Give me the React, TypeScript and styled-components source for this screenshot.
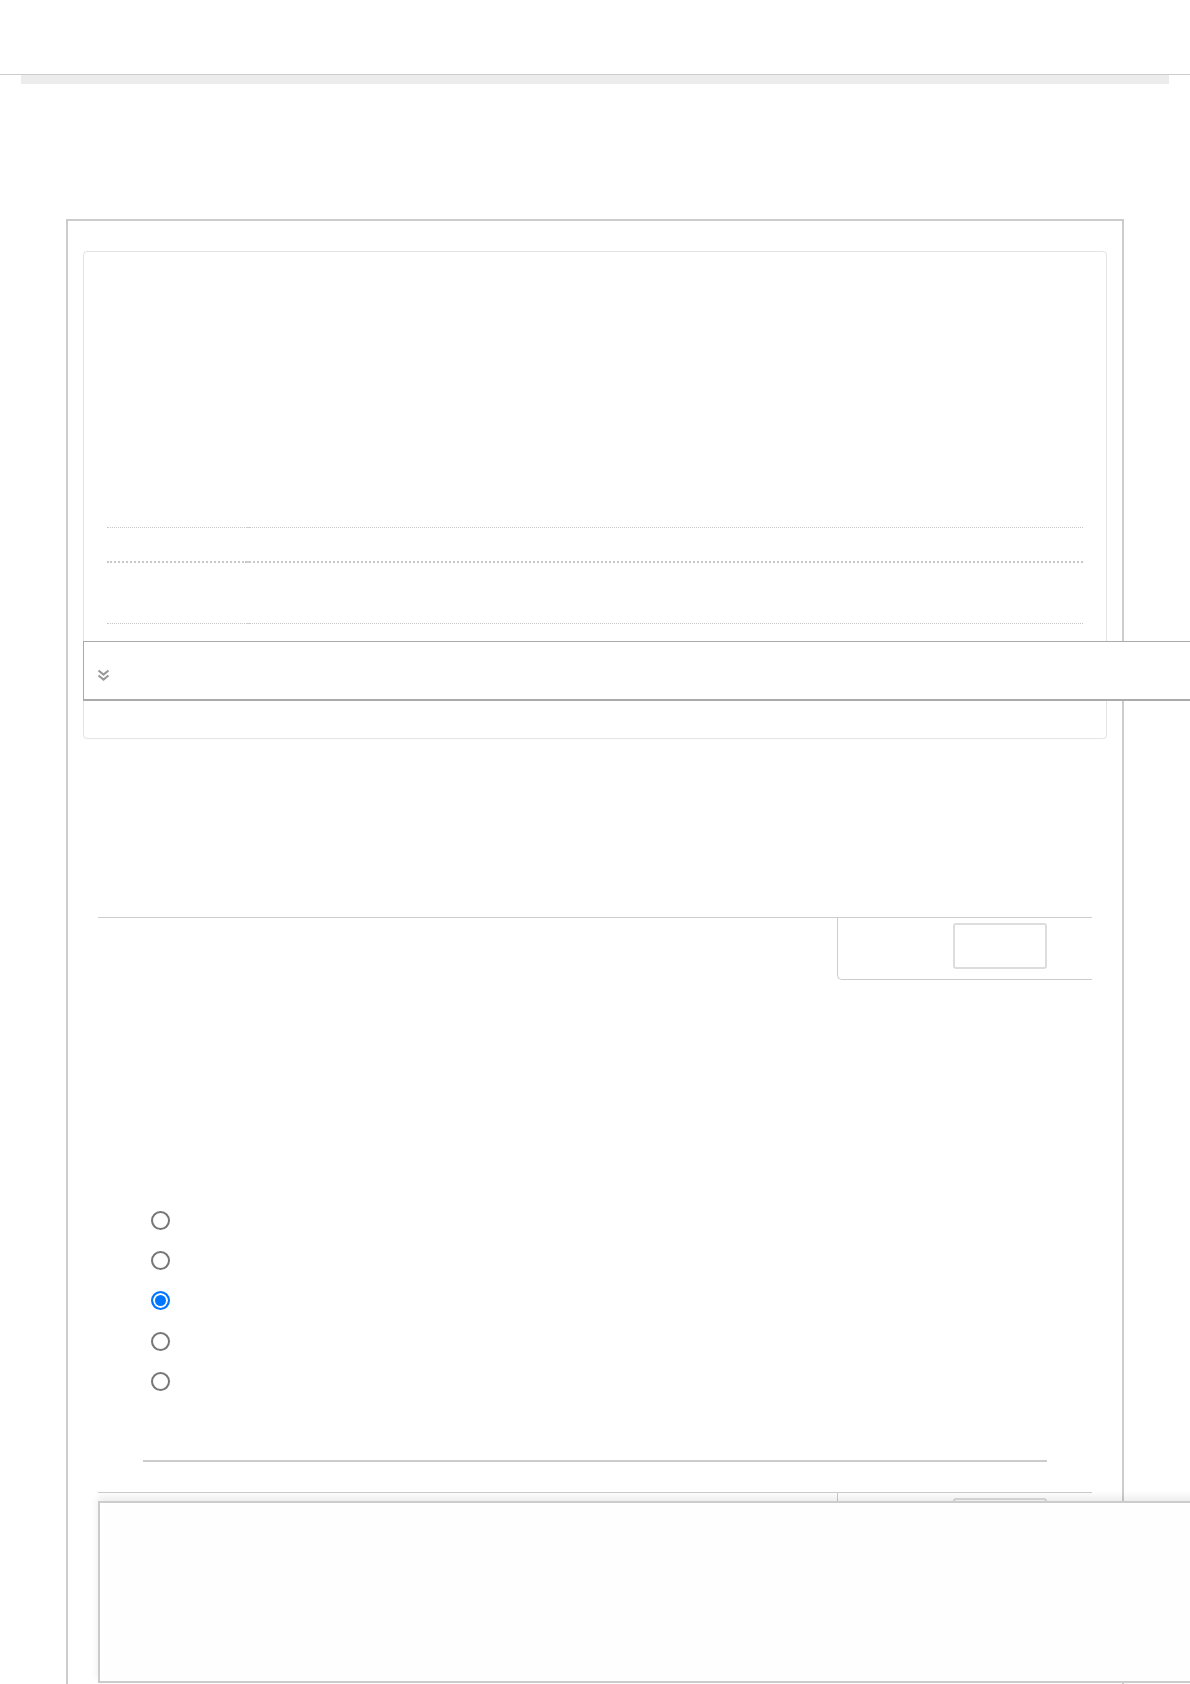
import React from "react";
import styled, { createGlobalStyle } from "styled-components";

const Global = createGlobalStyle`
  html, body { margin: 0; padding: 0; overflow-x: hidden; background: #fff; }
  body { font-family: "Liberation Sans", Arial, sans-serif; color: #333; }
`;

const Header = styled.header`
  height: 74px;
  border-bottom: 1px solid #ccc;
  background: #fff;
`;

const ProgressTrack = styled.div`
  height: 9px;
  margin: 0 21px;
  background: #ececec;
`;

const Frame = styled.main`
  margin: 135px 0 0 66px;
  width: 1058px;
  box-sizing: border-box;
  min-height: 1470px;
  border: 2px solid #ccc;
  border-bottom: none;
  padding: 30px 15px 0;
`;

const Card = styled.section`
  border: 1px solid #e4e4e4;
  border-radius: 4px;
  box-shadow: 0 0 1px rgba(0, 0, 0, 0.06);
  padding-bottom: 37px;
`;

const CardIntro = styled.div`
  height: 240px;
`;

const Rows = styled.div`
  padding: 0 23px;
`;

const Row = styled.div`
  display: grid;
  grid-template-columns: 142px 1fr;
`;

const Cell = styled.div<{ $h: number; $w: number; $first?: boolean }>`
  height: ${(p) => p.$h}px;
  border-bottom: ${(p) => p.$w}px dotted #c8c8c8;
  margin-right: ${(p) => (p.$first ? "2px" : "0")};
  position: relative;
  &::after {
    content: "";
    display: ${(p) => (p.$first ? "block" : "none")};
    position: absolute;
    right: -3px;
    bottom: -${(p) => p.$w}px;
    width: 3px;
    height: ${(p) => p.$w}px;
    background: #d0d0d0;
  }
`;

const CollapseBar = styled.button`
  display: flex;
  align-items: center;
  margin: 17px 0 0 -1px;
  width: 1140px;
  height: 60px;
  box-sizing: border-box;
  padding: 8px 0 0 13px;
  background: #fff;
  border: 1px solid #aaa;
  border-bottom-width: 2px;
  border-right: none;
  cursor: pointer;
`;

const Section = styled.div<{ $top: number }>`
  margin: ${(p) => p.$top}px 15px 0;
`;

const Rule = styled.div`
  border-top: 1px solid #ccc;
`;

const ActionBox = styled.div`
  display: flex;
  justify-content: flex-end;
  margin-left: auto;
  width: 255px;
  height: 62px;
  box-sizing: border-box;
  padding: 5px 45px 0 0;
  border-left: 1px solid #ccc;
  border-bottom: 1px solid #ccc;
  border-bottom-left-radius: 5px;
`;

const GhostButton = styled.button`
  width: 94px;
  height: 46px;
  box-sizing: border-box;
  background: #fff;
  border: 2px solid #ddd;
  border-radius: 3px;
`;

const RadioList = styled.div`
  margin: 220px 0 0 53px;
  display: flex;
  flex-direction: column;
`;

const RadioRow = styled.label`
  display: flex;
  align-items: center;
  height: 40.3px;
`;

const Radio = styled.input`
  appearance: none;
  -webkit-appearance: none;
  width: 19px;
  height: 19px;
  margin: 0;
  box-sizing: border-box;
  border: 2px solid #767676;
  border-radius: 50%;
  background: #fff;
  &:checked {
    border: 2px solid #0075ff;
    background: #0075ff;
    box-shadow: inset 0 0 0 2px #fff;
  }
`;

const Divider = styled.hr`
  margin: 59px 45px 30px;
  border: none;
  border-top: 2px solid #ccc;
`;

const BottomSheet = styled.aside`
  position: fixed;
  left: 98px;
  right: -40px;
  bottom: 1px;
  height: 182px;
  box-sizing: border-box;
  background: #fefefe;
  border: 2px solid #ccc;
  border-right: none;
  box-shadow: 0 -4px 8px rgba(0, 0, 0, 0.08);
`;

const Chevrons = () => (
  <svg width="13" height="12" viewBox="0 0 13 12" fill="none" stroke="#9a9a9a" strokeWidth="2.2">
    <polyline points="1.5,1.5 6.5,5.5 11.5,1.5" />
    <polyline points="1.5,6.5 6.5,10.5 11.5,6.5" />
  </svg>
);

const ActionSection = ({ top }: { top: number }) => (
  <Section $top={top}>
    <Rule />
    <ActionBox>
      <GhostButton type="button" aria-label="" />
    </ActionBox>
  </Section>
);

const rows = [
  { h: 35, w: 1 },
  { h: 33, w: 2 },
  { h: 60, w: 1 },
];

export default function App() {
  const options = [0, 1, 2, 3, 4];
  return (
    <>
      <Global />
      <Header />
      <ProgressTrack />
      <Frame>
        <Card>
          <CardIntro />
          <Rows>
            {rows.map((r, i) => (
              <Row key={i}>
                <Cell $h={r.h} $w={r.w} $first />
                <Cell $h={r.h} $w={r.w} />
              </Row>
            ))}
          </Rows>
          <CollapseBar type="button" aria-label="expand">
            <Chevrons />
          </CollapseBar>
        </Card>
        <ActionSection top={178} />
        <Section $top={0}>
          <RadioList>
            {options.map((i) => (
              <RadioRow key={i}>
                <Radio type="radio" name="choice" defaultChecked={i === 2} />
              </RadioRow>
            ))}
          </RadioList>
          <Divider />
        </Section>
        <ActionSection top={0} />
      </Frame>
      <BottomSheet />
    </>
  );
}
